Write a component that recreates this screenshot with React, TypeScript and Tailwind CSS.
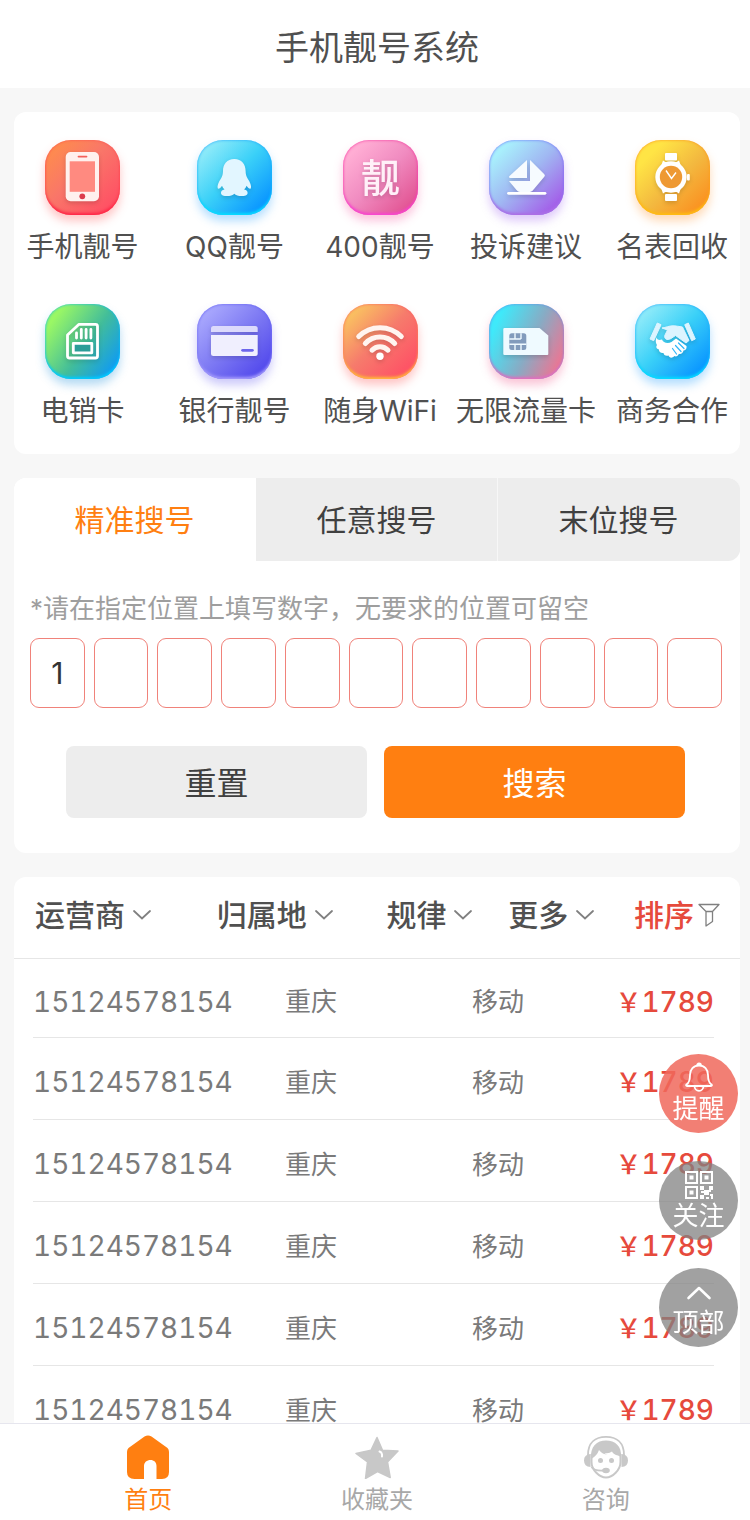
import { useState, type ReactNode } from 'react'

interface ServiceItem {
    label: string
    tile: string
    glyph: ReactNode
}

interface NumberRow {
    id: number
    phone: string
    city: string
    carrier: string
    price: number
}

const services: ServiceItem[] = [
    {
        label: '手机靓号',
        tile: 'bg-[linear-gradient(135deg,#ff8f4a_5%,#f97669_45%,#ff4f64_90%)] shadow-[0_6px_10px_rgba(255,90,90,0.35),inset_0_-3px_3px_-1px_#ff2547,inset_0_0_3px_#fb5350]',
        glyph: (
            <>
                <rect x="20.7" y="12" width="33.3" height="49.3" rx="5" fill="#fff1ee" />
                <rect x="24.7" y="21.3" width="25.3" height="30.5" fill="#ff8a80" />
                <path d="M33.5 16.6h8" stroke="#f4605a" strokeWidth="1.8" strokeLinecap="round" />
                <circle cx="37.3" cy="56.3" r="2.9" fill="#dc3c4c" />
            </>
        ),
    },
    {
        label: 'QQ靓号',
        tile: 'bg-[linear-gradient(135deg,#93ecf9_10%,#3ad0f8_48%,#0a96ff_88%)] shadow-[0_6px_10px_rgba(40,160,255,0.35),inset_0_-3px_3px_-1px_#04e0ff,inset_0_0_3px_#1fa4fb]',
        glyph: (
            <path
                fill="#e2f6ff"
                d="M37.3 19C30 19 26 24 26 31c0 3-.6 5-2 7.500-2.600 3.800-4 7.500-3.300 9.800.7 1.200 2.800-.2 4.300-2.600.5 1.500 1.300 2.800 2.500 3.900-2.600.6-3.500 1.900-3.500 3.300 0 2.500 3 3.200 6 3.200s6-.9 7.300-2.300c1.300 1.400 4.300 2.300 7.300 2.300s6-.7 6-3.200c0-1.400-.9-2.700-3.500-3.300 1.200-1.100 2-2.400 2.500-3.900 1.500 2.400 3.600 3.800 4.300 2.600.7-2.300-.7-6-3.300-9.800-1.400-2.500-2-4.500-2-7.500 0-7-4-12-11.300-12z"
            />
        ),
    },
    {
        label: '400靓号',
        tile: 'bg-[linear-gradient(135deg,#ffadd4_15%,#f08bc0_50%,#e04c8c_95%)] shadow-[0_6px_10px_rgba(245,90,160,0.35),inset_0_-3px_3px_-1px_#f846d4,inset_0_0_3px_#f6309c]',
        glyph: (
            <text x="37.500" y="51.500" textAnchor="middle" fontSize="39" fontWeight="500" fill="#fff0f8">
                靓
            </text>
        ),
    },
    {
        label: '投诉建议',
        tile: 'bg-[linear-gradient(135deg,#a8effc_15%,#a0b6f2_50%,#a35ae8_90%)] shadow-[0_6px_10px_rgba(160,100,240,0.35),inset_0_-3px_3px_-1px_#b06fe4,inset_0_0_3px_#6d70fa]',
        glyph: (
            <g fill="#f6fbff">
                <path d="M38 20v18H21.500c-1.500 0-2-1-1-2z" />
                <path d="M41 20l14.300 14.200q1.200 1.200 0 2.600L45 49q-2 3-4 3H31q-2 0-3.500-2L20 41h21z" />
                <path d="M19.500 53.300h36.500" stroke="#fff" strokeWidth="2.800" strokeLinecap="round" />
            </g>
        ),
    },
    {
        label: '名表回收',
        tile: 'bg-[linear-gradient(135deg,#ffe445_20%,#f3b83f_55%,#fb9020_90%)] shadow-[0_6px_10px_rgba(255,150,50,0.35),inset_0_-3px_3px_-1px_#ffc010,inset_0_0_3px_#fc901e]',
        glyph: (
            <g fill="#fff">
                <rect x="30" y="13" width="12" height="7.500" rx="1" />
                <rect x="30" y="54" width="12" height="7" rx="1" />
                <path d="M28 20.500l2.300 1.500h11.400l2.300-1.500 3.500 10v13l-3.500 10-2.300-1.500H30.300L28 53.500l-3.500-10v-13z" />
                <circle cx="36" cy="37" r="15.700" />
                <rect x="52" y="34" width="2.800" height="6.500" rx="1" />
                <circle cx="36" cy="37" r="11.200" fill="#ee9933" />
                <path d="M31 30.500l5.500 8 4.500-6" fill="none" stroke="#fff" strokeWidth="1.400" />
            </g>
        ),
    },
    {
        label: '电销卡',
        tile: 'bg-[linear-gradient(125deg,#9af765_15%,#42bd9a_55%,#109bf2_90%)] shadow-[0_6px_10px_rgba(40,150,220,0.35),inset_0_-3px_3px_-1px_#00ccff,inset_0_0_3px_#0bbcf4]',
        glyph: (
            <g fill="none" stroke="#fff" strokeWidth="2.800" strokeLinecap="round" strokeLinejoin="round">
                <path d="M34 20.300h16.500q2 0 2 2V52q0 2-2 2H24.500q-2 0-2-2V31z" />
                <path d="M31.500 29v5M36.300 25.500V34M41.100 25.500V34M45.900 25.500V34" />
                <rect x="28.300" y="39.300" width="18.500" height="9.500" fill="#2a9d98" />
            </g>
        ),
    },
    {
        label: '银行靓号',
        tile: 'bg-[linear-gradient(135deg,#a8a7fd_12%,#7d79f3_50%,#5148ec_90%)] shadow-[0_6px_10px_rgba(110,100,240,0.35),inset_0_-3px_3px_-1px_#a79dfb,inset_0_0_3px_#5d5bf2]',
        glyph: (
            <>
                <path d="M14 28v-3.500q0-2.500 2.500-2.500h41.700q2.500 0 2.500 2.500V28z" fill="#dcdafc" />
                <path d="M14 31h46.700v18.500q0 2.500-2.500 2.500H16.500Q14 52 14 49.500z" fill="#f0effe" />
                <path d="M45.600 46.300h9.800" stroke="#6c66ec" strokeWidth="2.800" strokeLinecap="round" />
            </>
        ),
    },
    {
        label: '随身WiFi',
        tile: 'bg-[linear-gradient(135deg,#fac560_10%,#f67b6c_48%,#ff4f65_90%)] shadow-[0_6px_10px_rgba(255,90,90,0.35),inset_0_-3px_3px_-1px_#ffbd3a,inset_0_0_3px_#fb5d62]',
        glyph: (
            <g fill="none" stroke="#fff4f0" strokeWidth="5" strokeLinecap="round">
                <path d="M15.700 32.500a30 30 0 0 1 42.600 0" />
                <path d="M22.300 39.500a20 20 0 0 1 29.400 0" />
                <path d="M29 46.200a11 11 0 0 1 16 0" />
                <circle cx="37" cy="52.300" r="3.700" fill="#fff" stroke="none" />
            </g>
        ),
    },
    {
        label: '无限流量卡',
        tile: 'bg-[linear-gradient(115deg,#3fe9fa_15%,#88abc4_55%,#fa6e8c_95%)] shadow-[0_6px_10px_rgba(240,90,140,0.35),inset_0_-3px_3px_-1px_#e76fbc,inset_0_0_3px_#5f90ea]',
        glyph: (
            <>
                <path d="M15.500 24h35l8.800 7.500V50q0 1-1 1H15.500q-1.200 0-1.200-1V25q0-1 1.200-1z" fill="#effaff" />
                <rect x="20.300" y="29.300" width="17" height="16.600" rx="2.500" fill="#829bbc" />
                <path d="M20.300 35h11.500M20.300 40.300h17M26 29.300V35M32 29.300V35M26 40.300v5.600M32 40.300v5.600" stroke="#effaff" strokeWidth="1.400" />
            </>
        ),
    },
    {
        label: '商务合作',
        tile: 'bg-[linear-gradient(135deg,#93ecf9_10%,#3ad0f8_48%,#0a96ff_88%)] shadow-[0_6px_10px_rgba(40,160,255,0.35),inset_0_-3px_3px_-1px_#04e0ff,inset_0_0_3px_#1fa4fb]',
        glyph: (
            <>
                <g fill="#dcf4ff" stroke="#dcf4ff" strokeWidth="1" strokeLinejoin="round">
                    <path d="M22.300 19l3.700 1.700-7.300 16-3.700-1.700zM49.700 20.700l3.600-1.700 7 16-3.600 1.700z" />
                    <path d="M27 24c4-.5 7-2.200 11-2.200 3 0 6 .7 9.500 1.200L54 36.500 51 39l-10.500-7.500-4.500 3c-4 2.500-7.500 0-6-3.500l2.500-5z" />
                </g>
                <path
                    fill="#fff"
                    d="M21.500 33.500c1 3 3.500 2.500 5.500 2 1 3.500 6 4.500 9.500 2.500l4.500-3.500L51.500 42c.5 3-1 4.500-3 4.500-.5 2.500-2.500 4-4.500 3.300-1 2.200-3 3.200-4.500 2.200-2.500 2.500-5 2-6-.5-2.500 1-5-.5-5-2.500-3 .5-5-1.500-4.500-3.500-2.500-.5-3.500-2.500-2-4.500-1.500-2-1.500-5-.5-7.500z"
                />
                <path d="M37.500 44.500l4 5.500M40.500 41.500l5.500 6M43.500 39l5.500 5.500" fill="none" stroke="#2fb6f8" strokeWidth="1.200" strokeLinecap="round" />
            </>
        ),
    },
]

const tabs = ['精准搜号', '任意搜号', '末位搜号']
const filters = ['运营商', '归属地', '规律', '更多']

const rows: NumberRow[] = Array.from({ length: 6 }, (_, id) => ({
    id,
    phone: '15124578154',
    city: '重庆',
    carrier: '移动',
    price: 1789,
}))

const ServiceGrid = () => (
    <section className="rounded-xl bg-white pt-7 pb-[23px]">
        <div className="-ml-1.5 grid grid-cols-[149fr_155fr_136fr_156fr_136fr] gap-y-[37px]">
            {services.map((item) => (
                <a key={item.label} href="#" className="flex flex-col items-center gap-3">
                    <span className={`h-[75px] w-[75px] rounded-[26px] ${item.tile}`}>
                        <svg viewBox="0 0 75 75" className="h-full w-full drop-shadow-[0_2px_2px_rgba(0,0,0,0.15)]">
                            {item.glyph}
                        </svg>
                    </span>
                    <span className="pt-px text-[28px] leading-[39px] whitespace-nowrap text-[#505050]">{item.label}</span>
                </a>
            ))}
        </div>
    </section>
)

const SearchPanel = () => {
    const [activeTab, setActiveTab] = useState(0)
    const [digits, setDigits] = useState<string[]>(['1', ...Array(10).fill('')])

    const handleDigit = (index: number, value: string) => {
        setDigits(digits.map((digit, i) => (i === index ? value : digit)))
    }

    return (
        <section className="overflow-hidden rounded-xl bg-white">
            <div role="tablist" className="grid grid-cols-3 overflow-hidden rounded-br-xl">
                {tabs.map((tab, i) => (
                    <button
                        key={tab}
                        role="tab"
                        aria-selected={i === activeTab}
                        onClick={() => setActiveTab(i)}
                        className={`h-[83px] border-r pt-0.5 text-[30px] ${
                            i === activeTab
                                ? 'border-white bg-white text-[#ff7f11]'
                                : 'border-[#f7f7f7] bg-[#ededed] text-[#404040] last:border-[#ededed]'
                        }`}
                    >
                        {tab}
                    </button>
                ))}
            </div>

            <form onSubmit={(e) => e.preventDefault()} onReset={() => setDigits(Array(11).fill(''))}>
                <p className="px-4 pt-7 text-[26px] leading-10 text-[#9e9e9e]">
                    *请在指定位置上填写数字，无要求的位置可留空
                </p>
                <div className="mt-[9px] flex gap-[9px] pr-[18px] pl-4">
                    {digits.map((digit, i) => (
                        <input
                            key={i}
                            aria-label={`第${i + 1}位`}
                            inputMode="numeric"
                            maxLength={1}
                            value={digit}
                            onChange={(e) => handleDigit(i, e.target.value)}
                            className="h-[70px] min-w-0 flex-1 rounded-[9px] border border-[#f0827a] text-center text-[30px] text-[#333] outline-none"
                        />
                    ))}
                </div>
                <div className="mt-[38px] flex gap-[17px] pr-[55px] pb-[35px] pl-[52px] text-[32px]">
                    <button type="reset" className="h-[72px] flex-1 rounded-lg bg-[#ededed] pt-1 text-[#404040]">
                        重置
                    </button>
                    <button type="submit" className="h-[72px] flex-1 rounded-lg bg-[#ff7f11] pt-1 text-white">
                        搜索
                    </button>
                </div>
            </form>
        </section>
    )
}

const NumberList = () => (
    <section className="rounded-t-xl bg-white">
        <div className="grid grid-cols-[182fr_170fr_122fr_126fr_86fr] border-b border-[#e6e6e6] pt-[17px] pr-5 pb-[22px] pl-[21px] text-[30px] leading-[42px] font-medium whitespace-nowrap text-[#505050]">
            {filters.map((filter) => (
                <button key={filter} className="flex items-center gap-2">
                    {filter}
                    <svg viewBox="0 0 18 10" className="h-2.5 w-[18px]" fill="none" stroke="#808080" strokeWidth="1.800" strokeLinecap="round">
                        <path d="M1 1l8 7.500L17 1" />
                    </svg>
                </button>
            ))}
            <button className="flex items-center gap-1 text-[#e64a3c]">
                排序
                <svg viewBox="0 0 22 24" className="h-6 w-[22px]" fill="none" stroke="#808080" strokeWidth="1.300" strokeLinejoin="round">
                    <path d="M1 1.500h20L14.500 8.500v10L8 23V8.500zM8 8.500h6.500" />
                </svg>
            </button>
        </div>

        <div className="pr-[26px] pl-[19px]">
            <table className="w-full table-fixed border-collapse text-left text-[26px] text-[#7a7a7a] tabular-nums">
                <tbody>
                    {rows.map((row) => (
                        <tr key={row.id} className="h-[82px] border-b border-[#e6e6e6] *:pt-2 first:h-[78px]">
                            <td className="w-[252px] text-[28px]">{row.phone}</td>
                            <td className="w-[187px]">{row.city}</td>
                            <td>{row.carrier}</td>
                            <td className="text-right font-medium whitespace-nowrap text-[#e64a3c]">
                                ￥<span className="text-[28px]">{row.price}</span>
                            </td>
                        </tr>
                    ))}
                </tbody>
            </table>
        </div>
    </section>
)

const floatButton = 'flex h-[79px] w-[79px] flex-col items-center rounded-full pt-2 text-[26px] leading-8 text-white'

const FloatingActions = () => (
    <div className="fixed right-3 bottom-[173px] flex flex-col gap-7">
        <button className={`${floatButton} bg-[#f0695c]/85`}>
            <svg viewBox="0 0 28 31" className="h-[31px] w-7 shrink-0" fill="none" stroke="#fff" strokeWidth="1.800" strokeLinecap="round" strokeLinejoin="round">
                <path d="M14 3.500c-5.500 0-9 4-9 9.500 0 5-.5 7.500-3.500 9.500-.8.700-.4 1.500.5 1.500h24c.9 0 1.300-.8.500-1.500-3-2-3.500-4.500-3.500-9.500 0-5.500-3.500-9.500-9-9.500zM12 3.500a2 2 0 0 1 4 0M9.500 24c0 2.800 2 4.800 4.500 4.800s4.500-2 4.500-4.800" />
            </svg>
            提醒
        </button>
        <button className={`${floatButton} bg-[#828282]/75`}>
            <svg viewBox="0 0 28 31" className="h-[31px] w-7 shrink-0" fill="#fff">
                <path
                    fillRule="evenodd"
                    d="M0 2h13v13H0zM2 4v9h9V4zM4.500 6.500h4v4h-4zM15 2h13v13H15zM17 4v9h9V4zM19.500 6.500h4v4h-4zM0 17h13v13H0zM2 19v9h9v-9zM4.500 21.500h4v4h-4z"
                />
                <path d="M15 17h4v4h-4zM24 17h4v4h-4zM19 21h5v-2h2v4h-2v3h-5v-2h-3v-2h3zM15 26h4v4h-4zM21 28h3v2h-3zM25 25h3v5h-2v-3h-1z" />
            </svg>
            关注
        </button>
        <button className={`${floatButton} bg-[#828282]/75`}>
            <svg viewBox="0 0 28 31" className="h-[31px] w-7 shrink-0" fill="none" stroke="#fff" strokeWidth="2.600" strokeLinecap="round" strokeLinejoin="round">
                <path d="M3.500 22L14 12l10.500 10" />
            </svg>
            顶部
        </button>
    </div>
)

const BottomNav = () => (
    <nav className="grid h-[97px] shrink-0 grid-cols-3 border-t border-[#e6e6ee] bg-white pr-[30px] pl-[34px] text-2xl leading-8 text-[#a8a8a8]">
        <a href="#" className="flex flex-col items-center gap-[5px] pt-[11px] text-[#ff7f11]">
            <svg viewBox="0 0 44 44" className="h-11 w-11 shrink-0" fill="currentColor">
                <path d="M18.500 1.500q3.500-2 7 0L41.500 13Q43 14.500 43 17v20q0 7-7 7h-5.500V31c0-3.800-2.500-6-6-6s-6.500 2.200-6.500 6v13H8.500q-7.500 0-7.500-7V17q0-2.500 1.500-4z" />
            </svg>
            首页
        </a>
        <a href="#" className="flex flex-col items-center gap-[5px] pt-[11px]">
            <svg viewBox="0 0 44 44" className="h-11 w-11 shrink-0">
                <path
                    d="M22 2.500l5.500 12.700 15.500.9-10.500 10.900 2.700 15.500-12.700-6-12 7 2-16.500L1 18.500l15-3.300z"
                    fill="#c8c8c8"
                    stroke="#c8c8c8"
                    strokeWidth="1.500"
                    strokeLinejoin="round"
                />
                <path d="M24.500 16.500q3 1 2.500 5" fill="none" stroke="#fff" strokeWidth="2" strokeLinecap="round" />
            </svg>
            收藏夹
        </a>
        <a href="#" className="flex flex-col items-center gap-[5px] pt-[11px]">
            <svg viewBox="0 0 46 44" className="h-11 w-[46px] shrink-0" fill="#c8c8c8">
                <path d="M5 20C5 8 12 1.800 23 1.800S41 8 41 20" fill="none" stroke="#c8c8c8" strokeWidth="1.800" />
                <path d="M7.500 19Q1 19.500 1 25.500t6.500 6.500zM38.500 19Q45 19.500 45 25.500t-6.500 6.500z" />
                <path d="M8.500 19v8c0 8 8 15.500 14.500 15.500S37.500 35 37.500 27v-8" fill="none" stroke="#c8c8c8" strokeWidth="2" />
                <path d="M8 24C7 11 14 5.500 23 5.500S39 11 38 22l-3-1.500q-4.500-1-6-4-3 2.500-7.500 1.500 1 1 3 1.500-5 0-8.500-4.500-2 6-8 9z" />
                <circle cx="17.500" cy="25.500" r="2.500" />
                <circle cx="28.500" cy="25.500" r="2.500" />
                <path d="M8.500 32q3 4 11.500 3.500" fill="none" stroke="#c8c8c8" strokeWidth="1.800" />
                <ellipse cx="23" cy="35.500" rx="3.800" ry="2.800" />
            </svg>
            咨询
        </a>
    </nav>
)

const App = () => (
    <div className="flex h-screen flex-col bg-[#f7f7f7] font-['Inter','Noto_Sans_CJK_SC',sans-serif]">
        <header className="flex h-[88px] shrink-0 items-center justify-center bg-white pt-2 pl-1">
            <h1 className="text-[34px] leading-[50px] text-[#505050]">手机靓号系统</h1>
        </header>
        <main className="flex min-h-0 flex-1 flex-col gap-6 overflow-y-auto pt-6 pr-2.5 pl-3.5 [scrollbar-width:none] *:shrink-0">
            <ServiceGrid />
            <SearchPanel />
            <NumberList />
        </main>
        <BottomNav />
        <FloatingActions />
    </div>
)

export default App
